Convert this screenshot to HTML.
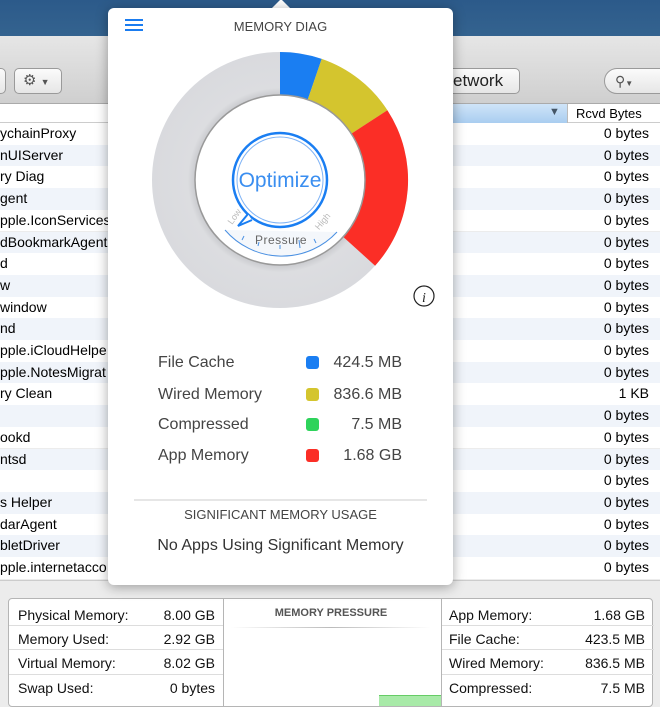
<!DOCTYPE html>
<html><head><meta charset="utf-8"><style>
*{margin:0;padding:0;box-sizing:border-box}
body{width:660px;height:707px;overflow:hidden;position:relative;font-family:"Liberation Sans",sans-serif;background:#ececec}
.top{position:absolute;left:0;top:0;width:660px;height:36px;background:linear-gradient(#2c5a8a,#34638f)}
.tb{position:absolute;left:0;top:36px;width:660px;height:68px;background:linear-gradient(#e6e6e6,#cfcfcf);border-bottom:1px solid #aaa}
.btn{position:absolute;height:26px;border:1px solid #9a9a9a;border-radius:5px;background:linear-gradient(#fbfbfb,#e6e6e6);font-size:17px;color:#222}
.hdr{position:absolute;top:104px;left:0;width:660px;height:19px;background:#fff;border-bottom:1px solid #ccc;font-size:13px}
.row{position:absolute;left:0;width:660px;height:21.7px;font-size:14px;color:#000;line-height:21.7px}
.row .n{position:absolute;left:0}
.row .b{position:absolute;right:11px}
.pop{position:absolute;left:108px;top:8px;width:345px;height:577px;background:#fff;border-radius:6px;box-shadow:0 2px 12px rgba(0,0,0,.35)}
.bot{position:absolute;left:8px;top:598px;width:645px;height:109px;background:#fff;border:1px solid #b5b5b5;border-radius:4px}
.bt{position:absolute;font-size:14px;color:#111}
.leg{position:absolute;font-size:16px;color:#444}
</style></head><body>
<div class="top"></div>
<div class="tb">
<div class="btn" style="left:-10px;top:32px;width:16px"></div>
<div class="btn" style="left:14px;top:32px;width:48px;font-size:15px;padding-left:8px;line-height:24px;color:#555">⚙ <span style="font-size:9px">▼</span></div>
<div class="btn" style="left:440px;top:32px;width:80px;padding-left:12px;line-height:24px">etwork</div>
<div class="btn" style="left:604px;top:32px;width:70px;border-radius:13px;padding-left:10px;line-height:24px;font-size:14px;color:#555">⚲<span style="font-size:8px">▼</span></div>
</div>
<div class="hdr"><div style="position:absolute;left:450px;top:0;width:117px;height:19px;background:linear-gradient(#cfe4f8,#a9cdf0)"></div><span style="position:absolute;left:549px;top:2px;color:#456;font-size:11px">▼</span><span style="position:absolute;left:576px;top:2px">Rcvd Bytes</span><div style="position:absolute;left:567px;top:0;width:1px;height:19px;background:#bbb"></div></div>
<div class="row" style="top:123px;background:#fff"><span class="n">ychainProxy</span><span class="b">0 bytes</span></div>
<div class="row" style="top:144.7px;background:#f0f4fa"><span class="n">nUIServer</span><span class="b">0 bytes</span></div>
<div class="row" style="top:166.4px;background:#fff"><span class="n">ry Diag</span><span class="b">0 bytes</span></div>
<div class="row" style="top:188.1px;background:#f0f4fa"><span class="n">gent</span><span class="b">0 bytes</span></div>
<div class="row" style="top:209.8px;background:#fff"><span class="n">pple.IconServices</span><span class="b">0 bytes</span></div>
<div class="row" style="top:231.5px;background:#f0f4fa"><span class="n">dBookmarkAgent</span><span class="b">0 bytes</span></div>
<div class="row" style="top:253.2px;background:#fff"><span class="n">d</span><span class="b">0 bytes</span></div>
<div class="row" style="top:274.9px;background:#f0f4fa"><span class="n">w</span><span class="b">0 bytes</span></div>
<div class="row" style="top:296.6px;background:#fff"><span class="n">window</span><span class="b">0 bytes</span></div>
<div class="row" style="top:318.3px;background:#f0f4fa"><span class="n">nd</span><span class="b">0 bytes</span></div>
<div class="row" style="top:340px;background:#fff"><span class="n">pple.iCloudHelpe</span><span class="b">0 bytes</span></div>
<div class="row" style="top:361.7px;background:#f0f4fa"><span class="n">pple.NotesMigrat</span><span class="b">0 bytes</span></div>
<div class="row" style="top:383.4px;background:#fff"><span class="n">ry Clean</span><span class="b">1 KB</span></div>
<div class="row" style="top:405.1px;background:#f0f4fa"><span class="n"></span><span class="b">0 bytes</span></div>
<div class="row" style="top:426.8px;background:#fff"><span class="n">ookd</span><span class="b">0 bytes</span></div>
<div class="row" style="top:448.5px;background:#f0f4fa"><span class="n">ntsd</span><span class="b">0 bytes</span></div>
<div class="row" style="top:470.2px;background:#fff"><span class="n"></span><span class="b">0 bytes</span></div>
<div class="row" style="top:491.9px;background:#f0f4fa"><span class="n">s Helper</span><span class="b">0 bytes</span></div>
<div class="row" style="top:513.6px;background:#fff"><span class="n">darAgent</span><span class="b">0 bytes</span></div>
<div class="row" style="top:535.3px;background:#f0f4fa"><span class="n">bletDriver</span><span class="b">0 bytes</span></div>
<div class="row" style="top:557px;background:#fff"><span class="n">pple.internetacco</span><span class="b">0 bytes</span></div>
<div style="position:absolute;left:0;top:580px;width:660px;height:127px;background:#ececec;border-top:1px solid #ccc"></div>

<div class="bot">
<div style="position:absolute;left:214px;top:0;width:1px;height:107px;background:#b5b5b5"></div>
<div style="position:absolute;left:432px;top:0;width:1px;height:107px;background:#b5b5b5"></div>
<div style="position:absolute;left:0;top:26px;width:214px;height:1px;background:#ddd"></div>
<div style="position:absolute;left:0;top:50px;width:214px;height:1px;background:#ddd"></div>
<div style="position:absolute;left:0;top:75px;width:214px;height:1px;background:#ddd"></div>
<div style="position:absolute;left:433px;top:26px;width:212px;height:1px;background:#ddd"></div>
<div style="position:absolute;left:433px;top:50px;width:212px;height:1px;background:#ddd"></div>
<div style="position:absolute;left:433px;top:75px;width:212px;height:1px;background:#ddd"></div>
<div style="position:absolute;left:222px;top:8px;width:200px;text-align:center;font-size:11px;font-weight:bold;color:#555">MEMORY PRESSURE</div>
<div style="position:absolute;left:222px;top:28px;width:200px;height:1px;background:linear-gradient(90deg,#fff,#bbb,#fff)"></div>
<div style="position:absolute;left:370px;top:96px;width:62px;height:11px;background:#a8eaa8;border-top:1px solid #6c6"></div>
</div>
<div class="bt" style="left:18px;top:607px">Physical Memory:</div><div class="bt" style="left:150px;top:607px;width:65px;text-align:right">8.00 GB</div>
<div class="bt" style="left:18px;top:631px">Memory Used:</div><div class="bt" style="left:150px;top:631px;width:65px;text-align:right">2.92 GB</div>
<div class="bt" style="left:18px;top:655px">Virtual Memory:</div><div class="bt" style="left:150px;top:655px;width:65px;text-align:right">8.02 GB</div>
<div class="bt" style="left:18px;top:680px">Swap Used:</div><div class="bt" style="left:150px;top:680px;width:65px;text-align:right">0 bytes</div>
<div class="bt" style="left:449px;top:607px">App Memory:</div><div class="bt" style="left:560px;top:607px;width:85px;text-align:right">1.68 GB</div>
<div class="bt" style="left:449px;top:631px">File Cache:</div><div class="bt" style="left:560px;top:631px;width:85px;text-align:right">423.5 MB</div>
<div class="bt" style="left:449px;top:655px">Wired Memory:</div><div class="bt" style="left:560px;top:655px;width:85px;text-align:right">836.5 MB</div>
<div class="bt" style="left:449px;top:680px">Compressed:</div><div class="bt" style="left:560px;top:680px;width:85px;text-align:right">7.5 MB</div>

<div style="position:absolute;left:271px;top:-1px;width:0;height:0;border-left:10px solid transparent;border-right:10px solid transparent;border-bottom:10px solid #fff"></div>
<div class="pop"></div>
<div style="position:absolute;left:125px;top:19px;width:18px;height:2px;background:#1a7cf0;box-shadow:0 5px 0 #1a7cf0,0 10px 0 #1a7cf0"></div>
<div style="position:absolute;left:108px;top:19px;width:345px;text-align:center;font-size:13px;color:#444">MEMORY DIAG</div>

<svg style="position:absolute;left:0;top:0" width="660" height="707">
<defs><radialGradient id="g" cx="280" cy="180" r="128" gradientUnits="userSpaceOnUse"><stop offset="0.66" stop-color="#c8c9cd"/><stop offset="0.72" stop-color="#dcdde0"/><stop offset="1" stop-color="#d9dade"/></radialGradient></defs>
<circle cx="280" cy="180" r="106.5" fill="none" stroke="url(#g)" stroke-width="43"/>
<path d="M280 52 A128 128 0 0 1 321.7 58.9 L307.7 99.6 A85 85 0 0 0 280 95 Z" fill="#1a7ef2"/>
<path d="M321.7 58.9 A128 128 0 0 1 387.4 110.2 L351.3 133.7 A85 85 0 0 0 307.7 99.6 Z" fill="#d4c52e"/>
<path d="M387.4 110.2 A128 128 0 0 1 375.1 265.7 L343.2 236.9 A85 85 0 0 0 351.3 133.7 Z" fill="#fb2e26"/>
<circle cx="280" cy="180" r="85" fill="#fff" stroke="#999" stroke-width="1.5"/>
<path d="M225 230 A75 75 0 0 0 337 232" fill="#f4f7fb" stroke="#4a90e2" stroke-width="1"/>
<g stroke="#4a90e2" stroke-width="1"><line x1="242" y1="240" x2="244" y2="236"/><line x1="258" y1="246" x2="259" y2="242"/><line x1="280" y1="249" x2="280" y2="245"/><line x1="300" y1="248" x2="299" y2="240"/><line x1="316" y1="243" x2="314" y2="239"/></g>
<text x="281" y="244" font-size="12" fill="#666" text-anchor="middle" font-family="Liberation Sans" letter-spacing="0.5">Pressure</text>
<text x="230" y="223" font-size="9" fill="#bbb" transform="rotate(-55 233 222)" font-family="Liberation Sans">Low</text>
<text x="316" y="228" font-size="9" fill="#bbb" transform="rotate(-50 320 226)" font-family="Liberation Sans">High</text>
<circle cx="280" cy="180" r="47" fill="#fff" stroke="#1a7ef2" stroke-width="2.5"/>
<circle cx="280" cy="180" r="43" fill="none" stroke="#7fb3f5" stroke-width="1"/>
<path d="M248 214 L238 226 L252 220" fill="#fff" stroke="#1a7ef2" stroke-width="2"/>
<text x="280" y="187" font-size="21" fill="#3a8ef0" text-anchor="middle" font-family="Liberation Sans">Optimize</text>
<circle cx="424" cy="296" r="10" fill="none" stroke="#222" stroke-width="1.2"/>
<text x="424" y="302" font-size="14" font-style="italic" fill="#222" text-anchor="middle" font-family="Liberation Serif">i</text>
<rect x="306" y="356" width="13" height="13" rx="3" fill="#1a7ef2"/>
<rect x="306" y="388" width="13" height="13" rx="3" fill="#d4c52e"/>
<rect x="306" y="418" width="13" height="13" rx="3" fill="#2ed35b"/>
<rect x="306" y="449" width="13" height="13" rx="3" fill="#fb2e26"/>
<line x1="134" y1="500" x2="427" y2="500" stroke="#ddd" stroke-width="1.5"/>
</svg>
<div class="leg" style="left:158px;top:354px">File Cache</div><div class="leg" style="left:320px;top:354px;width:82px;text-align:right">424.5 MB</div>
<div class="leg" style="left:158px;top:386px">Wired Memory</div><div class="leg" style="left:320px;top:386px;width:82px;text-align:right">836.6 MB</div>
<div class="leg" style="left:158px;top:416px">Compressed</div><div class="leg" style="left:320px;top:416px;width:82px;text-align:right">7.5 MB</div>
<div class="leg" style="left:158px;top:447px">App Memory</div><div class="leg" style="left:320px;top:447px;width:82px;text-align:right">1.68 GB</div>
<div style="position:absolute;left:108px;top:507px;width:345px;text-align:center;font-size:13px;color:#444">SIGNIFICANT MEMORY USAGE</div>
<div style="position:absolute;left:108px;top:537px;width:345px;text-align:center;font-size:16px;color:#333">No Apps Using Significant Memory</div>
</body></html>
